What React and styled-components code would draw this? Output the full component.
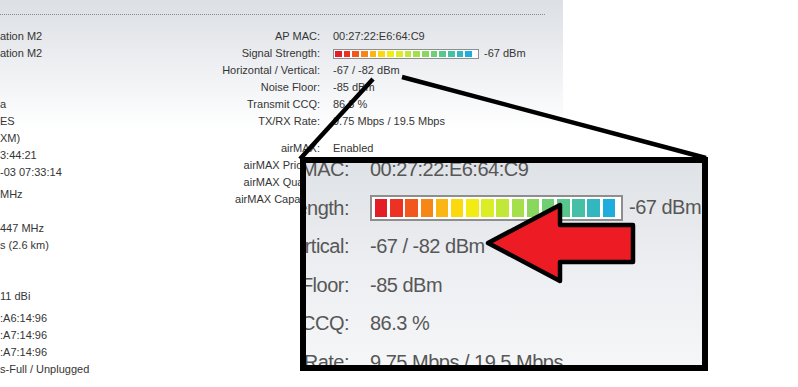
import React from 'react';
import styled, { createGlobalStyle } from 'styled-components';

const GlobalStyle = createGlobalStyle`
  html, body {
    margin: 0;
    padding: 0;
    background: #ffffff;
  }
  body {
    font-family: "Liberation Sans", Arial, sans-serif;
  }
`;

const Stage = styled.div`
  position: relative;
  width: 798px;
  height: 387px;
  overflow: hidden;
  background: #ffffff;
`;

const Panel = styled.div`
  width: 563px;
  height: 100%;
  background: linear-gradient(to bottom, #dcdfe4 0px, #eceef1 60px, #ffffff 130px);
  font-size: 11px;
  color: #353535;
`;

const Rule = styled.div`
  width: 545px;
  height: 14px;
  border-bottom: 1px dotted #8c8c8c;
  margin-bottom: 13px;
`;

const Columns = styled.div`
  display: flex;
  align-items: flex-start;
`;

const LeftCol = styled.div`
  width: 200px;
  display: flex;
  flex-direction: column;
`;

const Line = styled.div`
  height: 17px;
  line-height: 17px;
  white-space: nowrap;
  margin-top: ${p => p.gap || 0}px;
`;

const InfoGrid = styled.div`
  display: grid;
  grid-template-columns: 120px auto;
  column-gap: 13px;
  align-content: start;
  align-items: center;
  line-height: 17px;
`;

const Label = styled.div`
  height: ${p => (p.big ? 38.6 : 17)}px;
  line-height: ${p => (p.big ? 38.6 : 17)}px;
  text-align: right;
  white-space: nowrap;
  margin-top: ${p => p.gap || 0}px;
`;

const Value = styled.div`
  height: ${p => (p.big ? 38.6 : 17)}px;
  display: flex;
  align-items: center;
  white-space: nowrap;
  margin-top: ${p => p.gap || 0}px;
`;

const Bar = styled.div`
  box-sizing: border-box;
  display: flex;
  width: ${p => (p.big ? 253 : 146)}px;
  height: ${p => (p.big ? 26 : 10)}px;
  border: ${p => (p.big ? 2 : 1)}px solid #8e8e8e;
  padding: ${p => (p.big ? '2px 3px' : '1px')};
  background: #ffffff;
  margin-right: ${p => (p.big ? 6 : 5)}px;
`;

const Segments = styled.div`
  display: flex;
  gap: ${p => (p.big ? 2.7 : 2)}px;
  width: ${p => (p.big ? 240 : 137)}px;
  height: 100%;
`;

const Segment = styled.span`
  flex: 1;
  background: ${p => p.color};
`;

const Connector = styled.svg`
  position: absolute;
  left: 0;
  top: 0;
  pointer-events: none;
`;

const Callout = styled.div`
  position: absolute;
  left: 300px;
  top: 157px;
  width: 408px;
  height: 214px;
  box-sizing: border-box;
  border: 6px solid #000;
  overflow: hidden;
  background: linear-gradient(to bottom, #dfe2e6 0%, #eceef1 50%, #f5f6f8 100%);
`;

const ZoomGrid = styled.div`
  display: grid;
  grid-template-columns: 193px auto;
  column-gap: 21px;
  align-items: center;
  margin: -13px 0 0 -150px;
  font-size: 20px;
  letter-spacing: -0.5px;
  color: #575757;
`;

const ArrowSvg = styled.svg`
  position: absolute;
  left: 478px;
  top: 196px;
  pointer-events: none;
`;

const SEGMENTS = [
  '#e31e26', '#ec3323', '#f2581d', '#f68717', '#fab612', '#fcd90c',
  '#f3eb14', '#dbed24', '#c1e738', '#a5df4b', '#8ad75e', '#70cf73',
  '#58c78c', '#45bfa6', '#32b6c0', '#1fadde',
];

const LEFT_LINES = [
  { text: 'ation M2' },
  { text: 'ation M2' },
  { text: '' },
  { text: '' },
  { text: 'a' },
  { text: 'ES' },
  { text: 'XM)' },
  { text: '3:44:21' },
  { text: '-03 07:33:14' },
  { text: ' MHz', gap: 5 },
  { text: '' },
  { text: '447 MHz' },
  { text: 's (2.6 km)' },
  { text: '' },
  { text: '' },
  { text: ' 11 dBi' },
  { text: ':A6:14:96', gap: 5 },
  { text: ':A7:14:96' },
  { text: ':A7:14:96' },
  { text: 's-Full / Unplugged' },
];

const SignalBar = ({ big }) => (
  <Bar big={big}>
    <Segments big={big}>
      {SEGMENTS.map(c => <Segment key={c} color={c} />)}
    </Segments>
  </Bar>
);

const STATUS = [
  { label: 'AP MAC:', value: '00:27:22:E6:64:C9' },
  { label: 'Signal Strength:', value: '-67 dBm', bar: true },
  { label: 'Horizontal / Vertical:', value: '-67 / -82 dBm' },
  { label: 'Noise Floor:', value: '-85 dBm' },
  { label: 'Transmit CCQ:', value: '86.3 %' },
  { label: 'TX/RX Rate:', value: '9.75 Mbps / 19.5 Mbps' },
];

const AIRMAX = [
  { label: 'airMAX:', value: 'Enabled', gap: 10 },
  { label: 'airMAX Priority:', value: 'None' },
  { label: 'airMAX Quality:', value: '64 %' },
  { label: 'airMAX Capacity:', value: '52 %' },
];

const App = () => (
  <Stage>
    <GlobalStyle />
    <Panel>
      <Rule />
      <Columns>
        <LeftCol>
          {LEFT_LINES.map((l, i) => (
            <Line key={i} gap={l.gap}>{l.text || '\u00a0'}</Line>
          ))}
        </LeftCol>
        <InfoGrid>
          {[...STATUS, ...AIRMAX].map(row => (
            <React.Fragment key={row.label}>
              <Label gap={row.gap}>{row.label}</Label>
              <Value gap={row.gap}>
                {row.bar && <SignalBar />}
                {row.value}
              </Value>
            </React.Fragment>
          ))}
        </InfoGrid>
      </Columns>
    </Panel>

    <Connector width="798" height="387">
      <line x1="300" y1="159" x2="373" y2="79" stroke="#000" strokeWidth="4.5" />
      <line x1="402" y1="77" x2="706" y2="158" stroke="#000" strokeWidth="4.5" />
    </Connector>

    <Callout>
      <ZoomGrid>
        {STATUS.map(row => (
          <React.Fragment key={row.label}>
            <Label big>{row.label}</Label>
            <Value big>
              {row.bar && <SignalBar big />}
              {row.value}
            </Value>
          </React.Fragment>
        ))}
      </ZoomGrid>
    </Callout>

    <ArrowSvg width="165" height="95" viewBox="478 196 165 95">
      <polygon
        points="488,243 560,205 560,225 633,225 633,262 560,262 560,281"
        fill="#ed1c24"
        stroke="#000"
        strokeWidth="4.5"
        strokeLinejoin="round"
      />
    </ArrowSvg>
  </Stage>
);

export default App;
